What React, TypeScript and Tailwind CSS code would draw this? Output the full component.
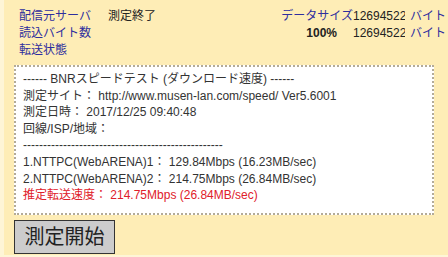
import React from "react";

const font = { fontFamily: '"Liberation Sans", Arial, "Noto Sans CJK JP", sans-serif' };

export default function App() {
  return (
    <div className="w-[448px] h-[257px] bg-[#fef5d6] overflow-hidden flex" style={font}>
      <div className="ml-[4px] w-[444px] h-[255px] bg-[#feedb6] flex flex-col text-[12px] leading-[17px] text-[#222]">
        <div className="pt-[8px] pl-[15px] flex flex-col">
          <div className="flex">
            <span className="w-[89px] shrink-0 text-[#2e2e9e]">配信元サーバ</span>
            <span className="w-[171px] shrink-0">測定終了</span>
            <span className="w-[74px] shrink-0 text-right text-[#2e2e9e] whitespace-nowrap">データサイズ</span>
            <span className="w-[52px] shrink-0 overflow-hidden whitespace-nowrap">12694522</span>
            <span className="ml-[5px] text-[#2e2e9e] whitespace-nowrap">バイト</span>
          </div>
          <div className="flex">
            <span className="w-[89px] shrink-0 text-[#2e2e9e]">読込バイト数</span>
            <span className="w-[171px] shrink-0"></span>
            <span className="w-[74px] shrink-0 text-right font-bold pr-[16px]">100%</span>
            <span className="w-[52px] shrink-0 overflow-hidden whitespace-nowrap">12694522</span>
            <span className="ml-[5px] text-[#2e2e9e] whitespace-nowrap">バイト</span>
          </div>
          <div className="flex">
            <span className="text-[#2e2e9e]">転送状態</span>
          </div>
        </div>
        <div className="mt-[6px] ml-[10px] w-[420px] h-[150px] bg-white border-2 border-dotted border-[#b3ab98] pt-[4px] pl-[7px] text-[12px] leading-[16.6px] text-[#333] whitespace-nowrap">
          <div>------ BNRスピードテスト (ダウンロード速度) ------</div>
          <div>測定サイト： http://www.musen-lan.com/speed/ Ver5.6001</div>
          <div>測定日時： 2017/12/25 09:40:48</div>
          <div>回線/ISP/地域：</div>
          <div>--------------------------------------------------</div>
          <div>1.NTTPC(WebARENA)1： 129.84Mbps (16.23MB/sec)</div>
          <div>2.NTTPC(WebARENA)2： 214.75Mbps (26.84MB/sec)</div>
          <div className="text-[#e0202a]">推定転送速度： 214.75Mbps (26.84MB/sec)</div>
        </div>
        <div className="mt-[5px] ml-[10px]">
          <button className="w-[101px] h-[34px] bg-[#cccccc] border border-[#333] text-[20px] leading-[24px] text-[#222] flex items-center justify-center">
            測定開始
          </button>
        </div>
      </div>
    </div>
  );
}
